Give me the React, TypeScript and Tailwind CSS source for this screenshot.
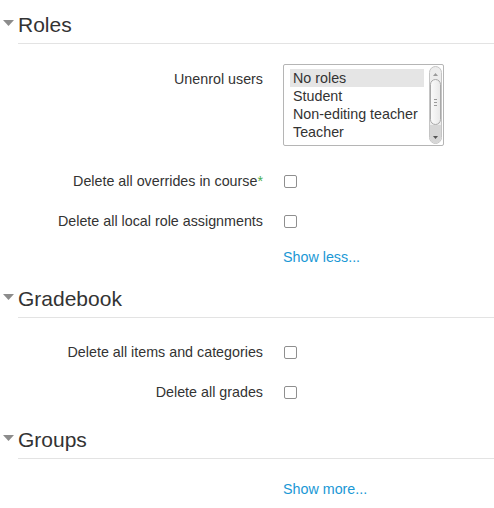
import React from "react";

const font = { fontFamily: '"Liberation Sans", Arial, sans-serif' };

function Header({ title, className = "" }: { title: string; className?: string }) {
  return (
    <div className={"flex " + className}>
      <div className="w-[18px] shrink-0 relative">
        <svg className="absolute left-[3px] top-[20px]" width="11" height="6" viewBox="0 0 11 6">
          <polygon points="0,0 11,0 5.5,6" fill="#8c8c8c" />
        </svg>
      </div>
      <div className="flex-1 border-b border-[#e3e3e3] pt-[13px] pb-[6px] text-[21px] leading-[24px] text-[#333]">
        {title}
      </div>
    </div>
  );
}

function Checkbox() {
  return <span className="block w-[13px] h-[13px] mt-[9px] ml-[1px] rounded-[2px] border border-[#8f8f8f] bg-white" />;
}

function Row({ label, star, className = "" }: { label: string; star?: boolean; className?: string }) {
  return (
    <div className={"flex h-[30px] " + className}>
      <div className="w-[263px] shrink-0 text-right pt-[5px] leading-[20px] text-[14.3px] text-[#333]">
        {label}
        {star && <span className="text-[#4cae4c]">*</span>}
      </div>
      <div className="ml-[20px]">
        <Checkbox />
      </div>
    </div>
  );
}

function Scrollbar() {
  return (
    <div className="w-[13px] mt-[1px] mb-[1px] mr-[1px] rounded-full border border-[#c4c4c4] bg-[#ececec] flex flex-col items-center">
      <svg className="mt-[6px]" width="5" height="3" viewBox="0 0 5 3">
        <polygon points="0,3 5,3 2.5,0" fill="#9a9a9a" />
      </svg>
      <div className="mt-[3px] w-[11px] h-[46px] rounded-full border border-[#a9a9a9] bg-gradient-to-r from-[#fafafa] to-[#e9e9e9] flex flex-col items-center justify-center gap-[2px]">
        <span className="block w-[3px] h-[1px] bg-[#9a9a9a]" />
        <span className="block w-[3px] h-[1px] bg-[#9a9a9a]" />
        <span className="block w-[3px] h-[1px] bg-[#9a9a9a]" />
      </div>
      <div className="w-[11px] flex-1 bg-[#d6d6d6] rounded-b-full flex flex-col items-center justify-end pb-[4px]">
        <svg width="5" height="3" viewBox="0 0 5 3">
          <polygon points="0,0 5,0 2.5,3" fill="#555" />
        </svg>
      </div>
    </div>
  );
}

export default function App() {
  const roles = ["No roles", "Student", "Non-editing teacher", "Teacher", "Manager"];
  return (
    <div className="w-[494px] h-[508px] bg-white overflow-hidden" style={font}>
      <Header title="Roles" />

      <div className="flex mt-[20px]">
        <div className="w-[263px] shrink-0 text-right pt-[5px] leading-[20px] text-[14.3px] text-[#333]">
          Unenrol users
        </div>
        <div className="ml-[20px] w-[161px] h-[82px] border border-[#b5b5b5] rounded-[2px] bg-white flex overflow-hidden">
          <div className="flex-1 pl-[6px] pr-[5px] pt-[4px] overflow-hidden">
            {roles.map((r, i) => (
              <div
                key={r}
                className={
                  "h-[18px] leading-[19px] pl-[3px] text-[14.3px] text-[#333] whitespace-nowrap " +
                  (i === 0 ? "bg-[#e5e5e5]" : "")
                }
              >
                {r}
              </div>
            ))}
          </div>
          <Scrollbar />
        </div>
      </div>

      <Row label="Delete all overrides in course" star className="mt-[20px]" />
      <Row label="Delete all local role assignments" className="mt-[10px]" />

      <div className="mt-[11px] pl-[283px] leading-[20px] text-[14.3px] text-[#1a98d5]">Show less...</div>

      <Header title="Gradebook" className="mt-[7px]" />
      <Row label="Delete all items and categories" className="mt-[19px]" />
      <Row label="Delete all grades" className="mt-[10px]" />

      <Header title="Groups" className="mt-[8px]" />
      <div className="mt-[20px] pl-[283px] leading-[20px] text-[14.3px] text-[#1a98d5]">Show more...</div>
    </div>
  );
}
